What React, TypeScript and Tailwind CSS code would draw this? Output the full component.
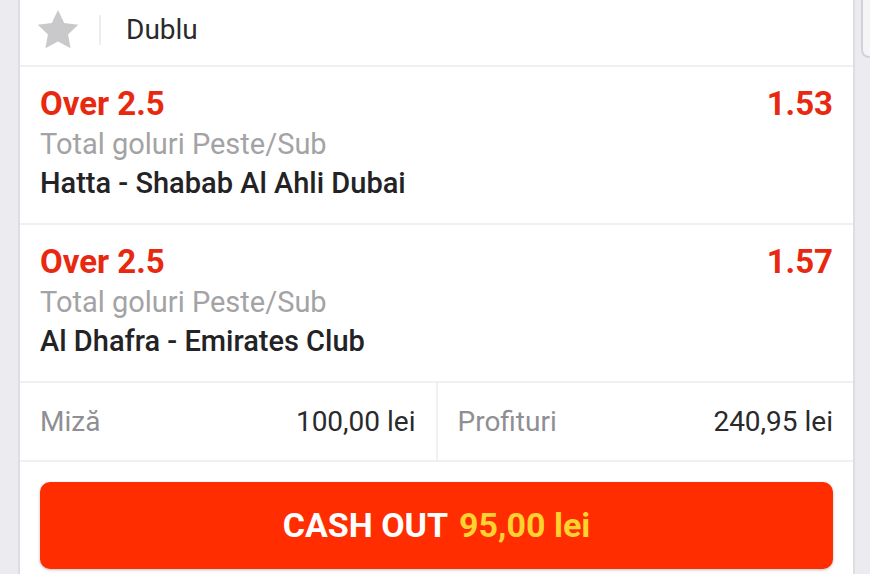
import React from "react";

interface Bet {
    pick: string;
    odds: string;
    market: string;
    match: string;
}

const bets: Bet[] = [
    { pick: "Over 2.5", odds: "1.53", market: "Total goluri Peste/Sub", match: "Hatta - Shabab Al Ahli Dubai" },
    { pick: "Over 2.5", odds: "1.57", market: "Total goluri Peste/Sub", match: "Al Dhafra - Emirates Club" },
];

function StarIcon() {
    return (
        <svg width="44" height="42" viewBox="0 0 24 23" className="shrink-0">
            <path
                d="M12 0.6l3.4 7 7.7 1-5.6 5.3 1.4 7.6-6.9-3.7-6.9 3.7 1.4-7.6-5.6-5.3 7.7-1z"
                fill="#c9c9cb"
            />
        </svg>
    );
}

function BetRow({ bet }: { bet: Bet }) {
    return (
        <div className="border-b-2 border-[#f0f0f2] px-5 pt-[17px] h-[158px]">
            <div className="flex justify-between text-[33px] leading-[39px] font-bold text-[#e8290f]">
                <span>{bet.pick}</span>
                <span>{bet.odds}</span>
            </div>
            <div className="mt-[2px] text-[29px] leading-[39px] text-[#a3a3a6]">{bet.market}</div>
            <div className="text-[29px] leading-[39px] font-medium text-[#232326]">{bet.match}</div>
        </div>
    );
}

export default function App() {
    return (
        <div className="flex h-[574px] w-[870px] overflow-hidden bg-[#ececf0] font-['Roboto',sans-serif]">
            <div className="w-[18px] shrink-0" />

            <div className="w-[837px] shrink-0 border-x-2 border-[#dedee2] bg-white">
                <div className="flex h-[67px] items-center border-b-2 border-[#f0f0f2] pb-[6px] pl-[16px]">
                    <StarIcon />
                    <div className="ml-[19px] h-[30px] w-[2px] bg-[#ededef]" />
                    <span className="ml-[25px] text-[28px] text-[#2a2a2d]">Dublu</span>
                </div>

                {bets.map((bet, i) => (
                    <BetRow key={i} bet={bet} />
                ))}

                <div className="flex h-[79px] border-b-2 border-[#f0f0f2] text-[28px]">
                    <div className="flex flex-1 items-center justify-between border-r-2 border-[#f0f0f2] pl-5 pr-5">
                        <span className="text-[#8f8f93]">Miză</span>
                        <span className="text-[#2a2a2d]">100,00 lei</span>
                    </div>
                    <div className="flex flex-1 items-center justify-between pl-5 pr-5">
                        <span className="text-[#8f8f93]">Profituri</span>
                        <span className="text-[#2a2a2d]">240,95 lei</span>
                    </div>
                </div>

                <div className="px-5 pt-[20px]">
                    <button className="flex h-[87px] w-full items-center justify-center rounded-[10px] bg-[#ff2d00] text-[34px] font-bold shadow-[0_1px_3px_rgba(0,0,0,0.25)]">
                        <span className="text-white">CASH OUT</span>
                        <span className="ml-[11px] text-[#ffd22e]">95,00 lei</span>
                    </button>
                </div>
            </div>

            <div className="relative flex-1">
                <div className="absolute left-[6px] top-[-10px] h-[68px] w-[20px] rounded-bl-[8px] border-b-2 border-l-2 border-[#d3d3d7] bg-[#f5f5f7]" />
            </div>
        </div>
    );
}
